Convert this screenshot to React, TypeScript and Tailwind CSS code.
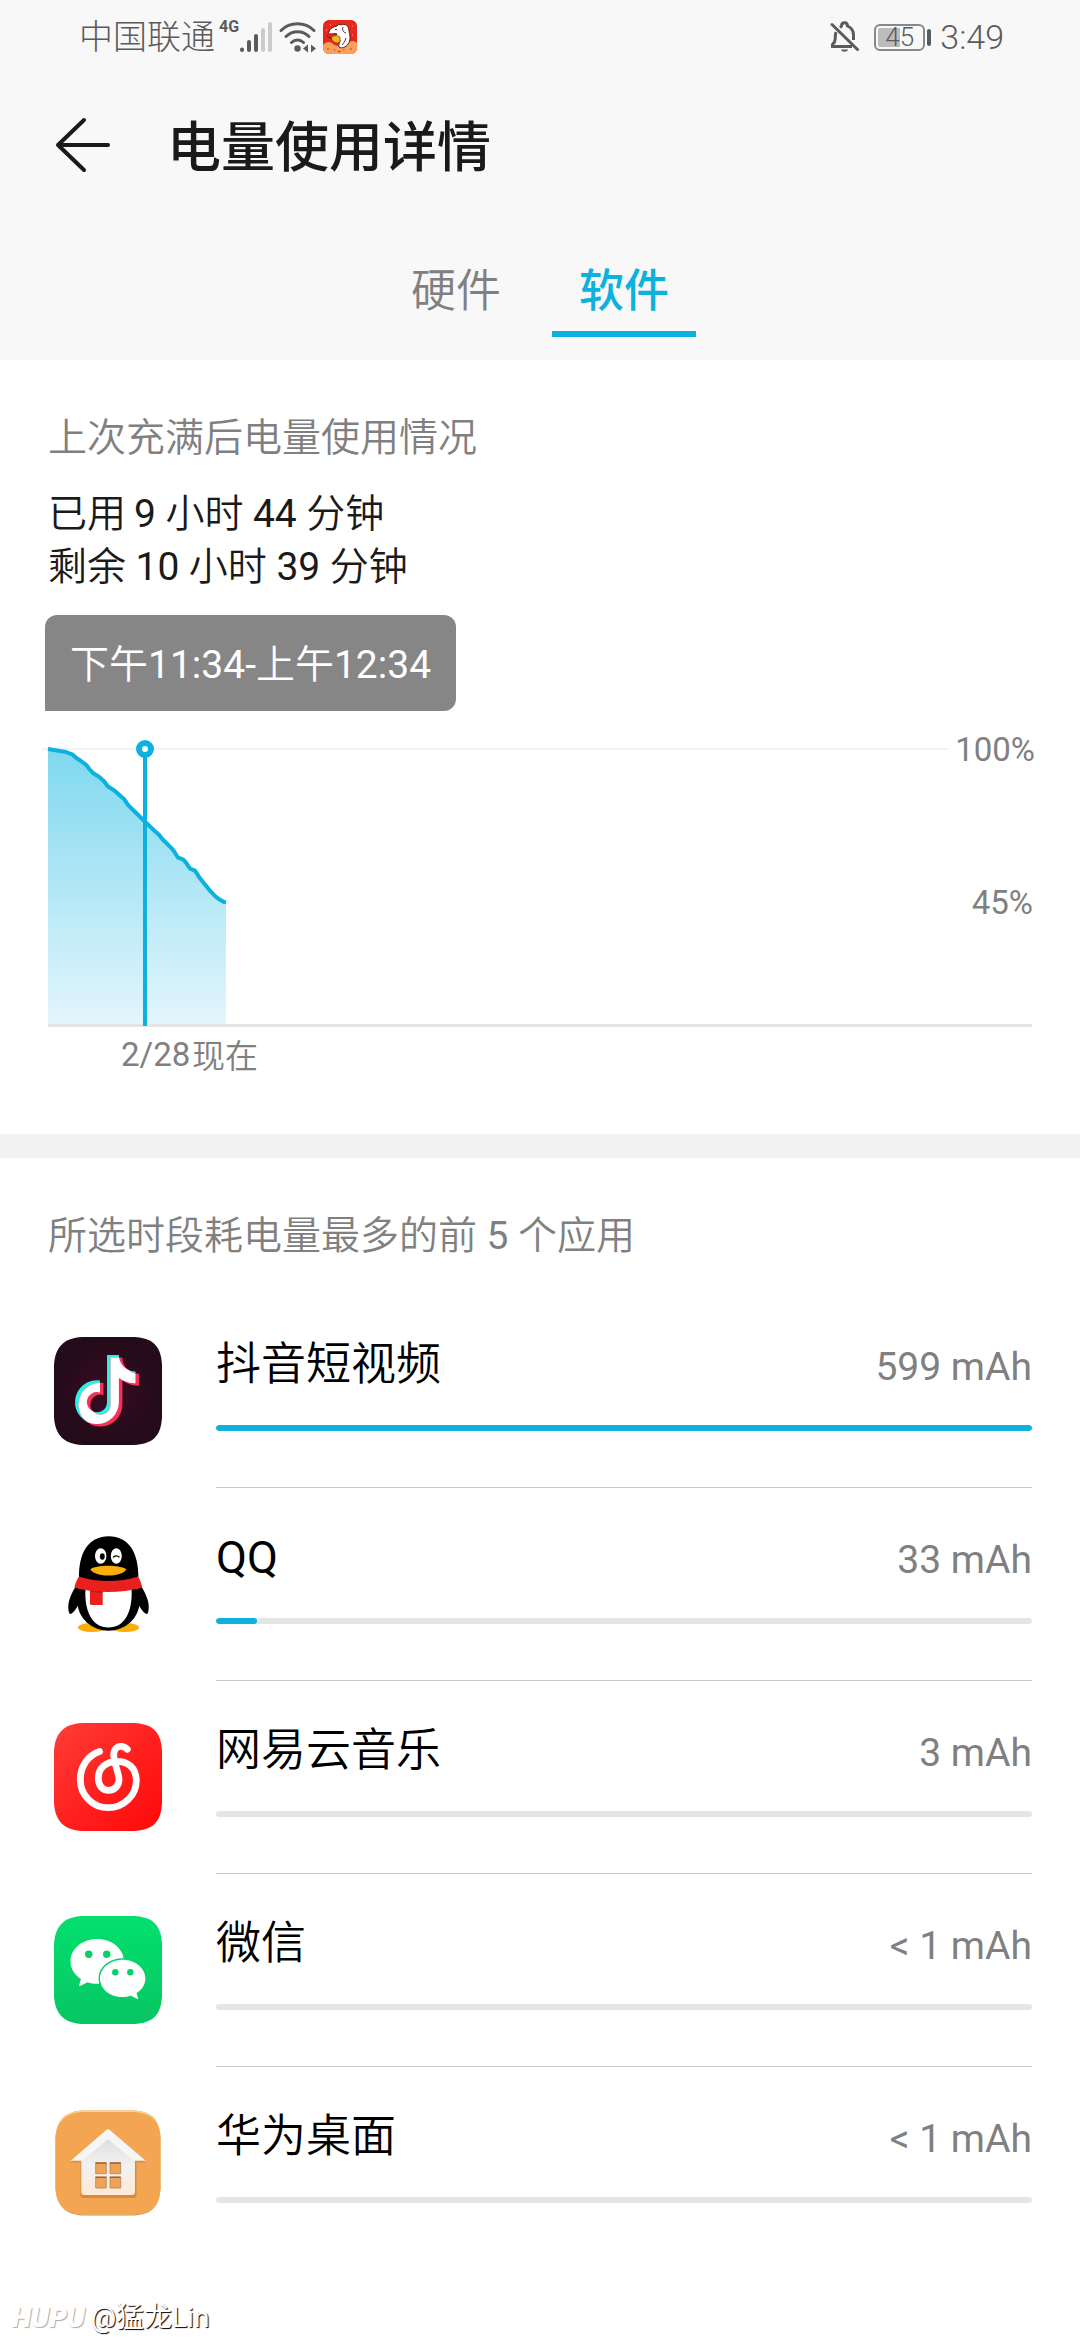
import { ReactNode, useState } from "react"
import clsx from "clsx"

const NOTE_PATH =
  "M448 209.9a210 210 0 0 1-122.8-39.2v178.7A162.6 162.6 0 1 1 185 188.3v89.9a74.6 74.6 0 1 0 52.2 71.2V0h88a121.2 121.2 0 0 0 1.9 22.2 122.2 122.2 0 0 0 53.9 80.2 121.4 121.4 0 0 0 67 20.1z"

const TILE_PATH =
  "M28 0H80C100 1 107 10 108 28V80C107 100 98 107 80 108H28C10 107 1 98 0 80V28C1 10 10 1 28 0z"

function DouyinIcon() {
  return (
    <svg viewBox="0 0 108 108" className="size-27" aria-hidden="true">
      <defs>
        <radialGradient id="douyin-bg">
          <stop offset="0" stopColor="#3a0b20" />
          <stop offset="1" stopColor="#230b1a" />
        </radialGradient>
        <clipPath id="douyin-note">
          <path d={NOTE_PATH} transform="translate(21 18) scale(.135)" />
        </clipPath>
      </defs>
      <path d={TILE_PATH} fill="url(#douyin-bg)" />
      <path d={NOTE_PATH} fill="#30efe9" transform="translate(21 18) scale(.135)" />
      <path d={NOTE_PATH} fill="#f7305a" transform="translate(24.5 20.5) scale(.135)" />
      <g clipPath="url(#douyin-note)">
        <path d={NOTE_PATH} fill="#fff" transform="translate(24.5 20.5) scale(.135)" />
      </g>
    </svg>
  )
}

function QQIcon() {
  return (
    <svg viewBox="0 0 108 108" className="size-27" aria-hidden="true">
      <ellipse cx="38" cy="97.5" rx="14" ry="4.5" fill="#f9ae08" />
      <ellipse cx="71" cy="97.5" rx="14" ry="4.5" fill="#f9ae08" />
      <path d="M22 56C17 64 14 71 14.3 78c.2 4 1 6 2 6 2 0 5-4 7.5-8l4-16z" />
      <path d="M87 56c5 8 8 15 7.7 22-.2 4-1 6-2 6-2 0-5-4-7.5-8l-4-16z" />
      <ellipse cx="54.5" cy="72" rx="31" ry="28.7" />
      <path d="M25 50C24 22 35 6.3 54.7 6.3S85 22 84.3 50L70 58H40z" />
      <path d="M31.5 58h46c1.5 24-7 39.5-23 39.5S30 82 31.5 58z" fill="#fff" />
      <path d="M25 46.5c18 6 41 6 59 0 2 3 3.5 7 4.3 11C66 63.5 42 63.5 20.3 57.5 21.5 53 23 49.5 25 46.5z" fill="#e9201d" />
      <path d="M36 59h12.7v16H37.5c-1.5 0-1.5-1-1.5-2z" fill="#e9201d" />
      <path d="M36 60.5l12.7.8V63L36 62z" fill="#c41a1a" />
      <ellipse cx="46.7" cy="26" rx="5.7" ry="7.8" fill="#fff" />
      <ellipse cx="62.3" cy="26" rx="5.5" ry="7.8" fill="#fff" />
      <ellipse cx="48.3" cy="26.5" rx="2.4" ry="3.2" />
      <path d="M59 27.5c1.5-2.2 4.5-2.2 6.5-.3" fill="none" stroke="#000" strokeWidth="1.3" />
      <path d="M36.3 39.5C41 34.5 67 34.5 72.3 39.5 67 47.5 42 47.5 36.3 39.5z" fill="#f9ae08" />
    </svg>
  )
}

function NeteaseIcon() {
  return (
    <svg viewBox="0 0 108 108" className="size-27" aria-hidden="true">
      <defs>
        <linearGradient id="netease-bg" x1="0" y1="0" x2="1" y2="1">
          <stop offset="0" stopColor="#ff3c37" />
          <stop offset="1" stopColor="#ff0808" />
        </linearGradient>
      </defs>
      <path d={TILE_PATH} fill="url(#netease-bg)" />
      <path
        d="M45.5 28.5C34 32.5 26.3 43 26.3 56.5c0 16 12.5 28.2 28 28.2s28-12.5 28-27C82.3 44 73 38.3 63 38.3c-11 0-18.7 7-18.7 17 0 7 4.2 12 10.4 12S65 62.5 65 56.5c0-6-5.3-17.5-5.3-24.5 0-5.5 3.3-8.7 7.3-8.7 3 0 4.500 1 6.300 3"
        fill="none"
        stroke="#fff"
        strokeWidth="6.8"
        strokeLinecap="round"
      />
    </svg>
  )
}

function WechatIcon() {
  return (
    <svg viewBox="0 0 108 108" className="size-27" aria-hidden="true">
      <defs>
        <linearGradient id="wechat-bg" x1="0" y1="0" x2="0" y2="1">
          <stop offset="0" stopColor="#02e06f" />
          <stop offset="1" stopColor="#08c561" />
        </linearGradient>
      </defs>
      <path d={TILE_PATH} fill="url(#wechat-bg)" />
      <path
        d="M43.3 23C28 23 16.5 33 16.5 45.5c0 7 4 13.5 10.5 17.5l-2 6.2c-.2.7.4 1 1 .7l7.5-3.7c4 1.2 7 1.7 11.5 1.5C60 66 70 57 70 45.5 70 33 58 23 43.3 23z"
        fill="#fff"
      />
      <path
        d="M68.7 43.7c-12.5 0-22.7 8.3-22.7 18.7s10.2 18.6 22.7 18.6c3 0 5.5-.4 8.3-1.2l6 3c.7.3 1.2 0 1-.7l-1.5-5c5.5-3.4 8.9-8.8 8.9-14.7 0-10.4-10.2-18.7-22.7-18.7z"
        fill="#fff"
        stroke="#04d168"
        strokeWidth="3"
        paintOrder="stroke"
      />
      <g fill="#04d168">
        <circle cx="34.7" cy="38.3" r="3.7" />
        <circle cx="52.7" cy="38.3" r="3.7" />
        <circle cx="61.3" cy="56.3" r="3.2" />
        <circle cx="76.3" cy="56.3" r="3.2" />
      </g>
    </svg>
  )
}

function HomeIcon() {
  return (
    <svg viewBox="0 0 108 108" className="size-27" aria-hidden="true">
      <defs>
        <linearGradient id="home-wall" x1="0" y1="0" x2="0" y2="1">
          <stop offset="0" stopColor="#dcdcdc" />
          <stop offset=".5" stopColor="#f3f1f0" />
          <stop offset="1" stopColor="#fde9d6" />
        </linearGradient>
      </defs>
      <g transform="translate(1.5 1.5) scale(.972)">
        <path d={TILE_PATH} fill="#cf8a45" />
        <path d={TILE_PATH} fill="#fbd48c" transform="scale(1 .99)" />
        <path d={TILE_PATH} fill="#f4a552" transform="translate(0 1.5) scale(1 .975)" />
      </g>
      <path d="M26.5 50h56v36q0 3-3 3h-50q-3 0-3-3z" fill="#b9752f" opacity=".55" />
      <path d="M54 22L92 53.5H84L54 34 24 53.5H16.5z" fill="#b9752f" opacity=".5" />
      <path d="M54 27L81 48v35q0 3-3 3H30.3q-3 0-3-3V48z" fill="url(#home-wall)" />
      <path d="M52.5 20.8q1.5-1.3 3 0L91.7 51.7H80L54 30.3 28 51.7H16.7z" fill="#f6f6f6" />
      <g fill="#eda35a" stroke="#b97f49" strokeWidth=".8">
        <path d="M41.7 54h10.6v10.7H41.7zM56 54h10.7v10.7H56zM41.7 68.3h10.6V79H41.7zM56 68.3h10.7V79H56z" />
      </g>
      <path d="M41.5 54h11M55.7 54h11M41.5 68.3h11M55.7 68.3h11" stroke="#9a6434" strokeWidth="1.5" />
    </svg>
  )
}

function SignalIcon() {
  return (
    <svg viewBox="0 0 34 32" className="h-8 w-[34px]" strokeWidth="4" strokeLinecap="round" aria-hidden="true">
      <path d="M3 28.5v.5M10 21v8M17 15v14" stroke="#5b5b5b" />
      <path d="M24 9v20M31 3v26" stroke="#cbcbcb" />
    </svg>
  )
}

function WifiIcon() {
  return (
    <svg viewBox="0 0 38 32" className="h-8 w-[38px]" fill="none" stroke="#5b5b5b" strokeWidth="3" strokeLinecap="round" aria-hidden="true">
      <path d="M2 9.5C11 .5 26 .5 35 9.5M7 15.5c6.5-6.5 16.5-6.5 23 0M12.500 21.500c3.500-3.300 8.500-3.300 12 0" />
      <circle cx="18.5" cy="27.5" r="3.2" fill="#5b5b5b" stroke="none" />
      <path d="M29 23.5v8l-5-4zM32 23.5v8l5-4z" fill="#5b5b5b" stroke="none" />
    </svg>
  )
}

function JDIcon() {
  return (
    <svg viewBox="0 0 34 34" className="size-[34px]" aria-hidden="true">
      <defs>
        <clipPath id="jd-tile">
          <rect width="34" height="34" rx="6" />
        </clipPath>
      </defs>
      <g clipPath="url(#jd-tile)">
        <rect width="34" height="34" fill="#e8261c" />
        <path d="M0 25q4-5 9-2 3 4 8 2 4-5 8-2 5-4 9 0v11H0z" fill="#f8a05c" />
        {/* dog: head with long ear, then body tapering to the feet */}
        <path
          d="M6 12C7 8 11 7 14 6c1-2 3-2 4-1 4-2 8 1 8 6 1 5 2 9-1 13-2 3-6 5-9 3-1-2 1-4 1-7-3 1-5-1-6-3l3-3c-2-1-4 0-6 0-2 0-3-1-2-2z"
          fill="#fff"
          stroke="#4a1712"
          strokeWidth=".9"
        />
        <path d="M8 18c3-3 6-3 9-1v5c-3 2-7 1-9-4z" fill="#f3b51c" stroke="#7a4a10" strokeWidth=".8" />
        <path d="M20 7c-1 3 0 5 3 6M12 9.5h2M4 16l5 3M23 18c-1 3-2 5-4 7" fill="none" stroke="#4a1712" strokeWidth=".9" />
        <path d="M11 30h1.5M20 30h1.5M15 31q1 1.5 2.5 0M4 29h2M27 29h2" stroke="#c23a1d" strokeWidth="1.2" fill="none" />
        <path d="M7 5h1M29 15h1M3 10h1M29 6h1" stroke="#ffb199" strokeWidth="1" />
      </g>
    </svg>
  )
}

function MutedBellIcon() {
  return (
    <svg viewBox="0 0 30 32" className="h-8 w-[30px]" fill="none" stroke="#5b5b5b" strokeWidth="3" aria-hidden="true">
      <path d="M6 11c-.7 2-.8 4-.8 7 0 3-1 4-2.7 5.5V25.500H22" />
      <path d="M10 6.5c1-.8 1.5-1 1.5-1.500 0-4.500 6-4.500 6 0 4.500 2 6 5 6 9v5" />
      <path d="M2 3.5l25.500 25" strokeLinecap="round" />
      <path d="M11 28.5h7c-.5 3-6.500 3-7 0z" fill="#5b5b5b" stroke="none" />
    </svg>
  )
}

function StatusBar() {
  return (
    <div className="flex h-[74px] items-center justify-between pr-[76px] pl-[79px] text-[#5b5b5b]">
      <div className="flex items-center">
        <span className="text-[34px] leading-10 font-light">中国联通</span>
        <span className="mb-5 ml-1 text-base leading-4 font-bold">4G</span>
        <SignalIcon />
        <div className="ml-[6px] flex items-center gap-[6px]">
          <WifiIcon />
          <JDIcon />
        </div>
      </div>
      <div className="flex items-center">
        <MutedBellIcon />
        <div className="ml-[14px] flex items-center gap-[2px]">
          <div className="flex h-[27px] w-[51px] items-center rounded-md border-2 border-[#888] p-[2px]">
            <div className="flex h-full w-full items-center justify-center rounded-xs bg-linear-to-r from-[#bcbcbc] from-50% to-transparent to-50% text-[26px] leading-6 font-light">
              45
            </div>
          </div>
          <div className="h-[17px] w-1 rounded-sm bg-[#5b5b5b]" />
        </div>
        <span className="ml-[9px] text-[34px] leading-10 font-light">3:49</span>
      </div>
    </div>
  )
}

// Battery level since the last full charge, in chart pixels
const LEVEL_POINTS =
  "0,14 18,17 24.7,19.7 28.7,23.3 33,26 38.7,30.3 41.3,34 45.3,38.3 51.3,42 56,46.3 59.7,51.3 66.7,55.7 72.7,61.3 76.3,64.3 80.3,70.3 97,86.7 107,96.3 111,99.7 114.3,104 123.7,113.3 126.7,117.3 129.7,122.3 135.3,124.7 138,127.7 142,133.7 147,135.7 152,143.3 162,155.7 167,161 171.3,164.3 176,167 178,167.3"

function BatteryChart() {
  return (
    <svg className="mt-6 block h-[345px] w-full overflow-visible" role="img" aria-label="电量使用情况">
      <defs>
        <linearGradient id="level" x1="0" y1="0" x2="0" y2="1">
          <stop offset="0" stopColor="#7fd8ef" />
          <stop offset="1" stopColor="#e4f6fc" />
        </linearGradient>
      </defs>
      <line x1="-6" y1="14" x2="91.5%" y2="14" stroke="#f2f2f2" strokeWidth="2" />
      <polygon points={`${LEVEL_POINTS} 178,290 0,290`} fill="url(#level)" />
      <line x1="0" y1="290.5" x2="100%" y2="290.5" stroke="#e5e5e5" strokeWidth="3" />
      <polyline points={LEVEL_POINTS} fill="none" stroke="#0cb2dd" strokeWidth="4" strokeLinejoin="round" />
      <line x1="97" y1="22" x2="97" y2="291" stroke="#0cb2dd" strokeWidth="4" />
      <circle cx="97" cy="14" r="6" fill="#fff" stroke="#0cb2dd" strokeWidth="6" />
      <g fill="#808080" className="text-[33px]">
        <text x="100%" y="26" dx="3" textAnchor="end">100%</text>
        <text x="100%" y="179" dx="1" textAnchor="end">45%</text>
        <text x="73" y="331">2/28</text>
        <text x="144" y="333" className="font-[350]">现在</text>
      </g>
    </svg>
  )
}

// Digits and Latin letters are set one step heavier than the Chinese text around them
function MixedText({ text }: { text: string }) {
  return (
    <span className="font-[350]">
      {text.split(/([!-~]+)/).map((part, i) =>
        i % 2 ? <span key={i} className="font-normal">{part}</span> : part
      )}
    </span>
  )
}

interface AppUsage {
  name: string
  usage: string
  percent: number
  icon: ReactNode
}

const apps: AppUsage[] = [
  { name: "抖音短视频", usage: "599 mAh", percent: 100, icon: <DouyinIcon /> },
  { name: "QQ", usage: "33 mAh", percent: 5, icon: <QQIcon /> },
  { name: "网易云音乐", usage: "3 mAh", percent: 0, icon: <NeteaseIcon /> },
  { name: "微信", usage: "< 1 mAh", percent: 0, icon: <WechatIcon /> },
  { name: "华为桌面", usage: "< 1 mAh", percent: 0, icon: <HomeIcon /> },
]

function AppRow({ name, usage, percent, icon }: AppUsage) {
  return (
    <li className="group flex gap-[54px] pl-[6px]">
      <div className="shrink-0 pt-[42px]">{icon}</div>
      <div className="h-[193px] flex-1 border-b border-[#c8c8c8] pt-[42px] group-last:border-transparent">
        <div className="flex h-14 items-center justify-between">
          <span className="text-[45px] leading-[56px] text-black">
            <MixedText text={name} />
          </span>
          <span className="pt-1 text-[39px] leading-[52px] text-[#808080]">{usage}</span>
        </div>
        <div className="mt-8 h-[6px] overflow-hidden rounded-full bg-[#e5e5e5]">
          <div className="h-full rounded-full bg-[#0cb2dd]" style={{ width: `${percent}%` }} />
        </div>
      </div>
    </li>
  )
}

const tabs = ["硬件", "软件"]

export default function App() {
  const [activeTab, setActiveTab] = useState("软件")

  return (
    <div className="min-h-screen bg-white font-[Roboto,'Noto_Sans_CJK_SC',sans-serif]">
      <header className="bg-[#f8f8f8] pb-[23px]">
        <StatusBar />
        <div className="flex h-[146px] items-center gap-14 pl-[55px] text-[#1a1a1a]">
          <button type="button" aria-label="返回">
            <svg viewBox="0 0 56 56" className="mb-1 size-14" fill="none" stroke="currentColor" strokeWidth="4" strokeLinecap="round" strokeLinejoin="round">
              <path d="M53 28H3M29 3L3 28l26 25" />
            </svg>
          </button>
          <h1 className="pt-1 text-[54px] leading-[72px] font-medium">电量使用详情</h1>
        </div>
        <div role="tablist" className="flex justify-center gap-6">
          {tabs.map((tab) => (
            <button
              key={tab}
              type="button"
              role="tab"
              aria-selected={tab === activeTab}
              onClick={() => setActiveTab(tab)}
              className={clsx(
                "h-[117px] w-36 border-b-[6px] pt-8 text-[45px] leading-[56px]",
                tab === activeTab ? "border-[#0cb2dd] font-medium text-[#0cb2dd]" : "border-transparent font-[350] text-[#808080]"
              )}
            >
              {tab}
            </button>
          ))}
        </div>
      </header>

      <main>
        {/* Battery level */}
        <section className="px-12 pt-[52px] pb-[54px]">
          <h2 className="text-[39px] leading-[52px] font-[350] text-[#808080]">上次充满后电量使用情况</h2>
          <div className="mt-6 text-[39px] leading-[53px] text-[#1a1a1a]">
            <p><MixedText text={"已用\u20099 小时 44 分钟"} /></p>
            <p><MixedText text="剩余 10 小时 39 分钟" /></p>
          </div>
          <div className="mt-[21px] -ml-[3px] flex h-24 w-fit items-center rounded-xl rounded-bl-none bg-[#868686] px-[25px] pt-1 text-[39px] leading-[52px] text-white">
            <MixedText text="下午11:34-上午12:34" />
          </div>
          <BatteryChart />
        </section>

        <div className="h-6 bg-[#f2f2f2]" />

        {/* Top apps */}
        <section className="px-12 pt-[52px]">
          <h2 className="text-[39px] leading-[52px] text-[#808080]">
            <MixedText text="所选时段耗电量最多的前 5 个应用" />
          </h2>
          <ul className="mt-[33px]">
            {apps.map((app) => (
              <AppRow key={app.name} {...app} />
            ))}
          </ul>
        </section>
      </main>

      <footer className="flex h-20 items-end gap-[6px] pb-1 pl-3 text-white">
        <span className="text-[28px] leading-9 font-black italic [text-shadow:1px_1px_1px_#aaa]">HUPU</span>
        <span className="text-[28px] leading-9 [text-shadow:1px_1px_1px_#000]">@猛龙Lin</span>
      </footer>
    </div>
  )
}
